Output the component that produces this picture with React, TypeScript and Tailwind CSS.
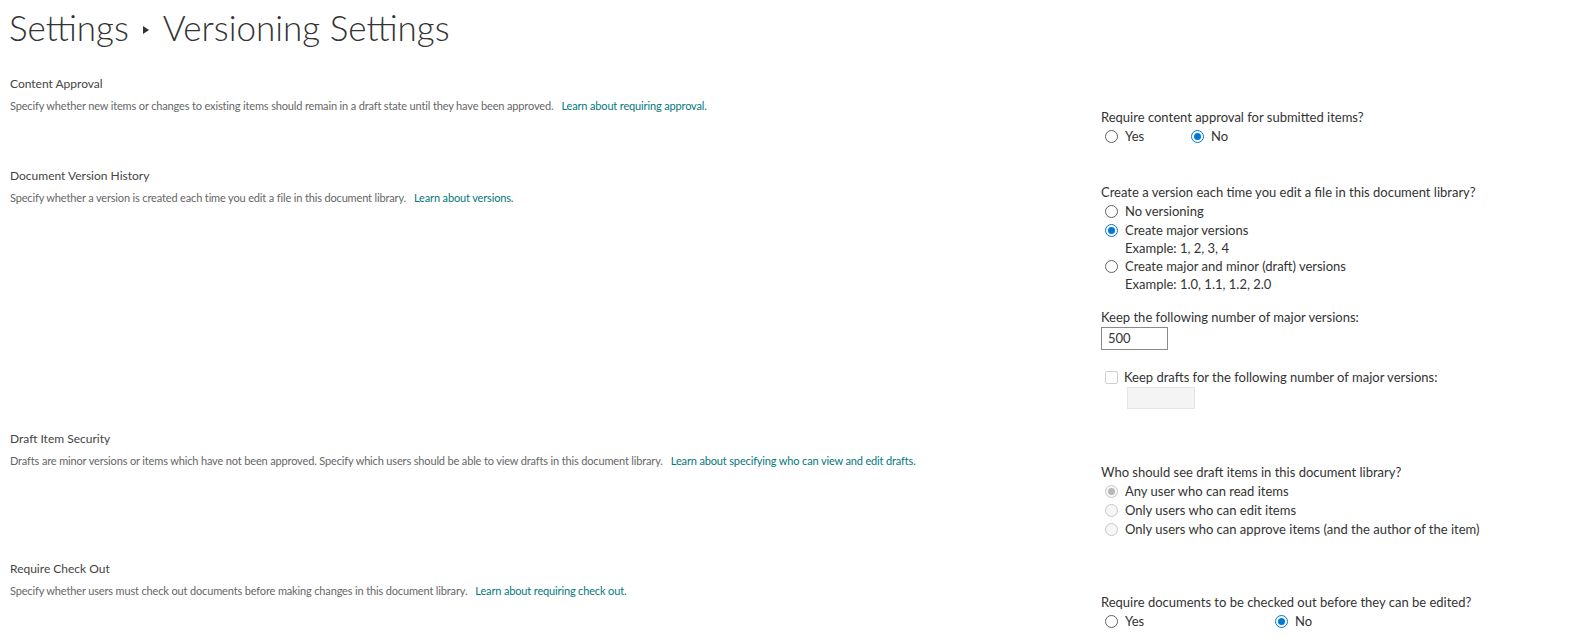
import React from 'react';

const font = { fontFamily: 'Lato, "Open Sans", sans-serif' };

// Radio circle drawn as css
const Radio: React.FC<{ checked?: boolean; disabled?: boolean }> = ({ checked, disabled }) => (
  <span
    className={
      'inline-flex items-center justify-center w-[13px] h-[13px] rounded-full border shrink-0 ' +
      (disabled
        ? 'border-[#c8c8c8] bg-[#f6f6f6]'
        : checked
        ? 'border-[#0078d4] bg-white'
        : 'border-[#5f5f5f] bg-white')
    }
  >
    {checked && (
      <span className={'w-[7px] h-[7px] rounded-full ' + (disabled ? 'bg-[#b8b8b8]' : 'bg-[#0078d4]')} />
    )}
  </span>
);

const Option: React.FC<{ label: string; checked?: boolean; disabled?: boolean; className?: string }> = ({
  label,
  checked,
  disabled,
  className,
}) => (
  <label className={'flex items-center gap-[7px] pl-[4px] h-[19px] ' + (className ?? '')}>
    <Radio checked={checked} disabled={disabled} />
    <span>{label}</span>
  </label>
);

const Section: React.FC<{
  title: string;
  desc: string;
  link: string;
  offset: string;
  children: React.ReactNode;
}> = ({ title, desc, link, offset, children }) => (
  <div className="flex pb-[22px]">
    <div className="w-[1101px] shrink-0 pl-[10px]">
      <h3 className="text-[12px] leading-[16px] text-[#444]">{title}</h3>
      <p className="mt-[6px] text-[11px] leading-[16px] text-[#666] tracking-[-0.15px]">
        {desc}
        <span className="ml-[8px] text-[#03787c]">{link}</span>
      </p>
    </div>
    <div className={'text-[13px] leading-[19px] text-[#333] ' + offset}>{children}</div>
  </div>
);

export default function App() {
  return (
    <div className="min-h-screen bg-white" style={font}>
      <h1 className="flex items-center pl-[9px] h-[55px] text-[35px] font-light text-[#333]">
        <span>Settings</span>
        <svg width="6" height="8" viewBox="0 0 6 8" className="mx-[14px] mt-[4px]">
          <path d="M0 0 L6 4 L0 8 Z" fill="#333" />
        </svg>
        <span>Versioning Settings</span>
      </h1>

      <div className="pt-[21px]">
        <Section
          title="Content Approval"
          desc="Specify whether new items or changes to existing items should remain in a draft state until they have been approved."
          link="Learn about requiring approval."
          offset="mt-[32px]"
        >
          <div>Require content approval for submitted items?</div>
          <div className="flex">
            <Option label="Yes" className="w-[86px]" />
            <Option label="No" checked />
          </div>
        </Section>

        <Section
          title="Document Version History"
          desc="Specify whether a version is created each time you edit a file in this document library."
          link="Learn about versions."
          offset="mt-[15px]"
        >
          <div>Create a version each time you edit a file in this document library?</div>
          <Option label="No versioning" />
          <Option label="Create major versions" checked />
          <div className="pl-[24px] leading-[17px]">Example: 1, 2, 3, 4</div>
          <Option label="Create major and minor (draft) versions" />
          <div className="pl-[24px] leading-[17px]">Example: 1.0, 1.1, 1.2, 2.0</div>
          <div className="mt-[15px]">Keep the following number of major versions:</div>
          <div className="w-[67px] h-[23px] border border-[#8a8a8a] pl-[6px] leading-[21px]">500</div>
          <div className="flex items-center gap-[6px] pl-[4px] mt-[18px] h-[19px]">
            <span className="w-[13px] h-[13px] rounded-[2px] border border-[#cfcfcf] bg-white" />
            <span>Keep drafts for the following number of major versions:</span>
          </div>
          <div className="ml-[26px] w-[68px] h-[22px] border border-[#e4e4e4] bg-[#f4f4f4]" />
        </Section>

        <Section
          title="Draft Item Security"
          desc="Drafts are minor versions or items which have not been approved. Specify which users should be able to view drafts in this document library."
          link="Learn about specifying who can view and edit drafts."
          offset="mt-[32px]"
        >
          <div>Who should see draft items in this document library?</div>
          <Option label="Any user who can read items" checked disabled />
          <Option label="Only users who can edit items" disabled />
          <Option label="Only users who can approve items (and the author of the item)" disabled />
        </Section>

        <Section
          title="Require Check Out"
          desc="Specify whether users must check out documents before making changes in this document library."
          link="Learn about requiring check out."
          offset="mt-[32px]"
        >
          <div>Require documents to be checked out before they can be edited?</div>
          <div className="flex">
            <Option label="Yes" className="w-[170px]" />
            <Option label="No" checked />
          </div>
        </Section>
      </div>
    </div>
  );
}
